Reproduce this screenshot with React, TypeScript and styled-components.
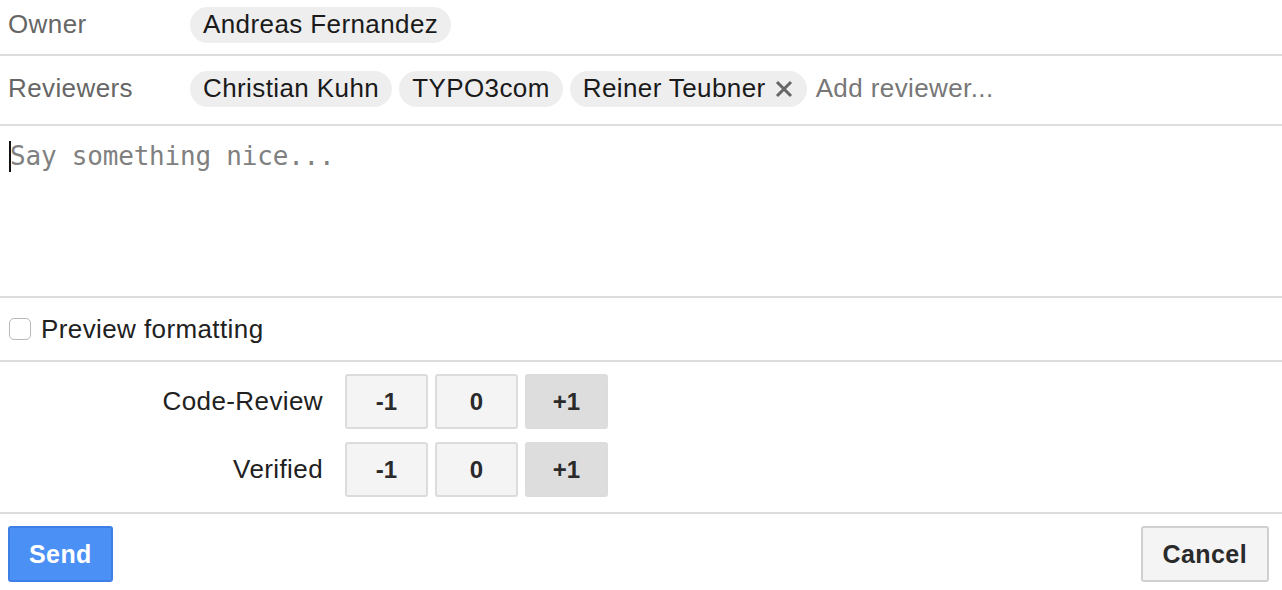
import styled, { createGlobalStyle } from 'styled-components'

const GlobalStyle = createGlobalStyle`
  html, body {
    margin: 0;
    padding: 0;
    background: #ffffff;
  }
  body {
    font-family: "Liberation Sans", Arial, sans-serif;
    font-size: 26px;
    letter-spacing: 0.4px;
    color: #212121;
  }
`

const Dialog = styled.div`
  width: 1282px;
  display: flex;
  flex-direction: column;
`

const InfoRow = styled.div<{ $height: number; $lift: number }>`
  display: flex;
  align-items: center;
  height: ${p => p.$height}px;
  box-sizing: border-box;
  padding: 0 0 ${p => p.$lift}px 8px;
  border-bottom: 2px solid #dddddd;
`

const RowLabel = styled.div`
  width: 182px;
  flex-shrink: 0;
  color: #666666;
`

const ChipList = styled.div`
  display: flex;
  align-items: center;
  gap: 7px;
`

const Chip = styled.span`
  display: inline-flex;
  align-items: center;
  height: 36px;
  padding: 0 13px;
  border-radius: 18px;
  background: #eeeeee;
  color: #1a1a1a;
  white-space: nowrap;
`

const RemoveButton = styled.span`
  display: inline-flex;
  margin-left: 8px;
  color: #666666;
`

const AddInput = styled.span`
  margin-left: 2px;
  color: #777777;
  white-space: nowrap;
`

const Editor = styled.div`
  height: 172px;
  padding: 15px 9px;
  box-sizing: border-box;
  border-bottom: 2px solid #dddddd;
  display: flex;
  align-items: flex-start;
`

const Caret = styled.span`
  display: inline-block;
  width: 2px;
  height: 31px;
  background: #111111;
  margin-right: -1px;
`

const Placeholder = styled.span`
  font-family: "DejaVu Sans Mono", "Liberation Mono", monospace;
  font-size: 26px;
  letter-spacing: -0.2px;
  line-height: 31px;
  color: #808080;
`

const CheckRow = styled.label`
  display: flex;
  align-items: center;
  gap: 10px;
  height: 62px;
  padding-left: 9px;
  border-bottom: 2px solid #dddddd;
`

const CheckBox = styled.span`
  width: 22px;
  height: 22px;
  box-sizing: border-box;
  border: 1.5px solid #b8b8b8;
  border-radius: 5px;
  background: #ffffff;
`

const Labels = styled.div`
  display: flex;
  flex-direction: column;
  gap: 13px;
  padding: 12px 0 15px;
  border-bottom: 2px solid #dddddd;
`

const LabelRow = styled.div`
  display: flex;
  align-items: center;
`

const LabelName = styled.div`
  width: 323px;
  text-align: right;
  padding-right: 22px;
  color: #212121;
`

const VoteGroup = styled.div`
  display: flex;
  gap: 7px;
`

const VoteButton = styled.button<{ $active?: boolean }>`
  width: 83px;
  height: 55px;
  border: 2px solid #dcdcdc;
  border-radius: 3px;
  background: ${p => (p.$active ? '#dddddd' : '#f4f4f4')};
  font-family: "Liberation Sans", Arial, sans-serif;
  font-size: 24px;
  font-weight: 700;
  color: #2a2a2a;
  padding: 0;
`

const Footer = styled.div`
  display: flex;
  justify-content: space-between;
  padding: 12px 13px 0 8px;
`

const ActionButton = styled.button<{ $primary?: boolean }>`
  height: 56px;
  padding: 0 ${p => (p.$primary ? 19 : 20)}px;
  border-radius: 3px;
  border: 2px solid ${p => (p.$primary ? '#3d7fe6' : '#d0d0d0')};
  background: ${p => (p.$primary ? '#4b90f5' : '#f4f4f4')};
  color: ${p => (p.$primary ? '#ffffff' : '#2a2a2a')};
  font-family: "Liberation Sans", Arial, sans-serif;
  font-size: 25px;
  letter-spacing: 0.4px;
  font-weight: 700;
`

const votes = ['-1', '0', '+1']

function VoteRow({ label }: { label: string }) {
  return (
    <LabelRow>
      <LabelName>{label}</LabelName>
      <VoteGroup>
        {votes.map(v => (
          <VoteButton key={v} $active={v === '+1'}>{v}</VoteButton>
        ))}
      </VoteGroup>
    </LabelRow>
  )
}

export default function App() {
  return (
    <>
      <GlobalStyle />
      <Dialog>
        <InfoRow $height={56} $lift={5}>
          <RowLabel>Owner</RowLabel>
          <ChipList>
            <Chip>Andreas Fernandez</Chip>
          </ChipList>
        </InfoRow>
        <InfoRow $height={70} $lift={3}>
          <RowLabel>Reviewers</RowLabel>
          <ChipList>
            <Chip>Christian Kuhn</Chip>
            <Chip>TYPO3com</Chip>
            <Chip>
              Reiner Teubner
              <RemoveButton>
                <svg width="20" height="20" viewBox="0 0 20 20">
                  <path d="M3 3 L17 17 M17 3 L3 17" stroke="currentColor" strokeWidth="3" strokeLinecap="butt" />
                </svg>
              </RemoveButton>
            </Chip>
            <AddInput>Add reviewer...</AddInput>
          </ChipList>
        </InfoRow>
        <Editor>
          <Caret />
          <Placeholder>Say something nice...</Placeholder>
        </Editor>
        <CheckRow>
          <CheckBox />
          <span>Preview formatting</span>
        </CheckRow>
        <Labels>
          <VoteRow label="Code-Review" />
          <VoteRow label="Verified" />
        </Labels>
        <Footer>
          <ActionButton $primary>Send</ActionButton>
          <ActionButton>Cancel</ActionButton>
        </Footer>
      </Dialog>
    </>
  )
}
